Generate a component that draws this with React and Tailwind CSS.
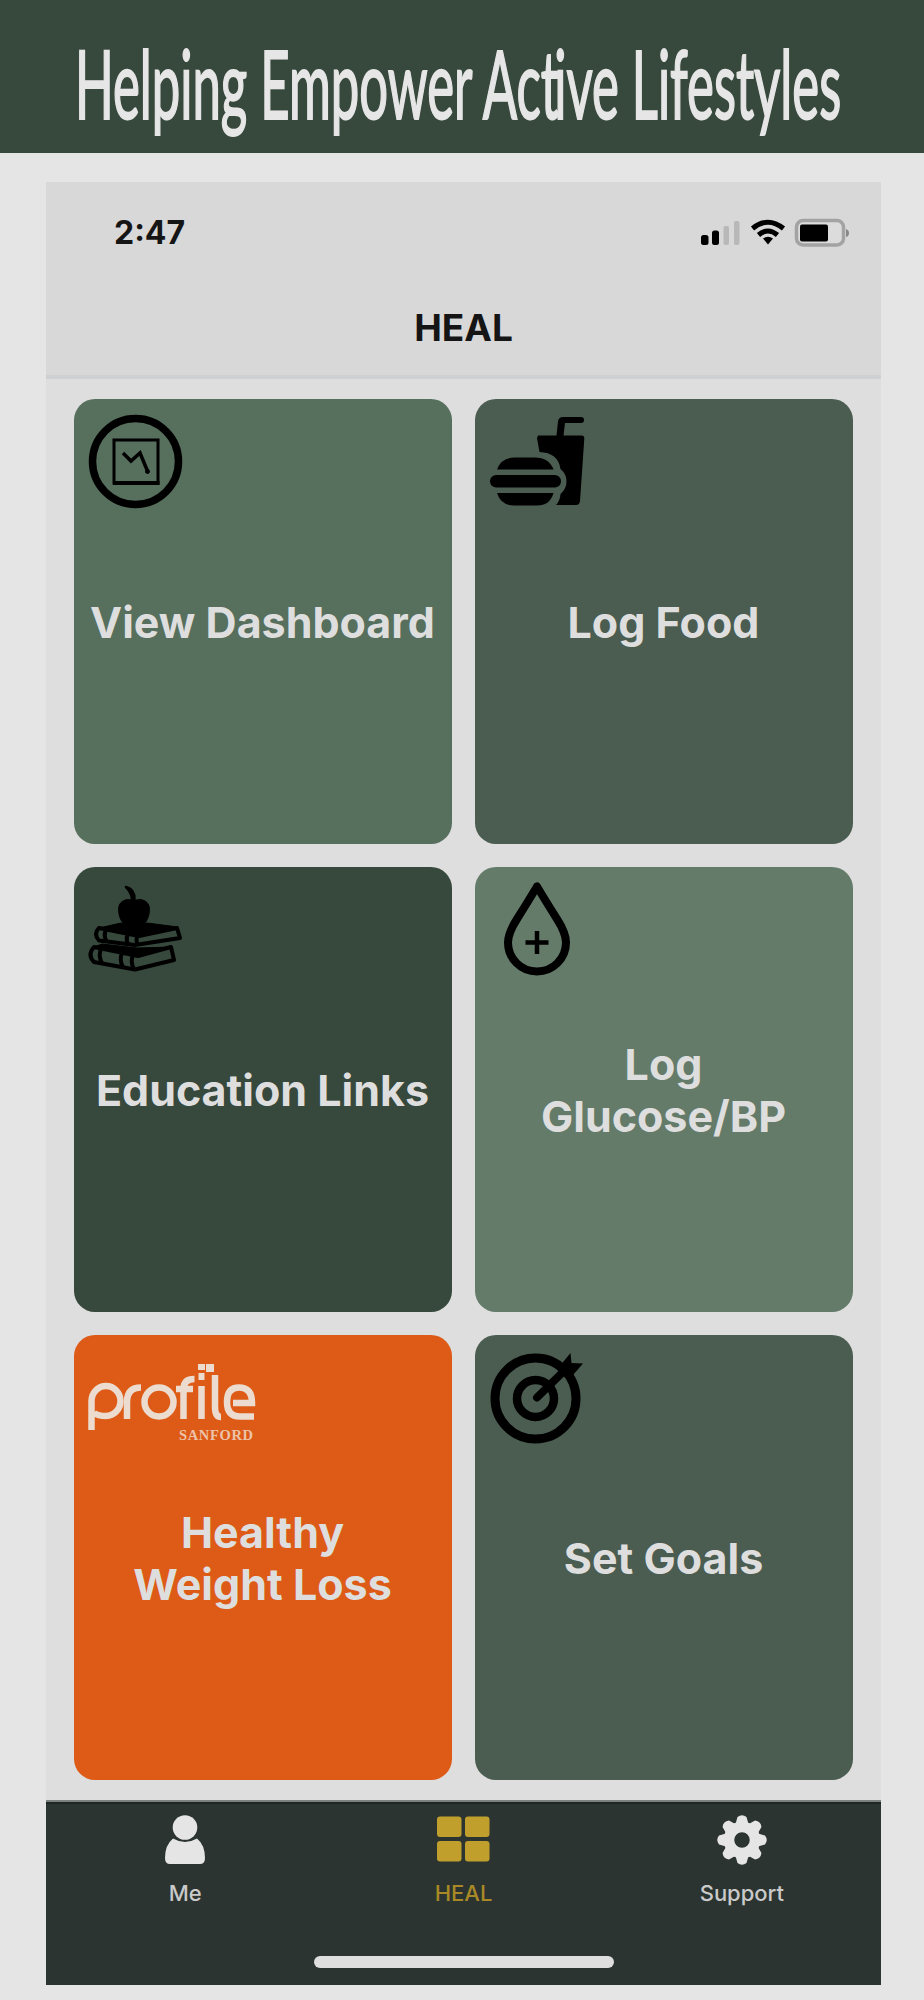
import * as React from "react"

function DashboardIcon() {
  return (
    <svg width="96" height="96" viewBox="0 0 96 96" fill="none" stroke="#000">
      <circle cx="47.500" cy="48.500" r="43" strokeWidth="7.500" />
      <rect x="26" y="27" width="44" height="43" strokeWidth="3" />
      <path d="M25 70h46.500" strokeWidth="4" />
      <path d="M35 40l8 8 9-8 7.500 18" strokeWidth="3.500" />
      <circle cx="59.500" cy="58.500" r="2" fill="#000" />
    </svg>
  )
}

function FoodIcon() {
  return (
    <svg width="96" height="96" viewBox="0 0 96 96">
      <path d="M49 22.500h18.500l1.500-14q.5-4.500 5-4.500h18q3 0 3 3t-3 3H76l-1.500 12.500h18q3 0 2.800 3L91 88q-.3 4-4 4H67q4-4 4.500-11 6-5 6-12.500t-6-12.500Q69 39.500 50.500 39L48 25z" />
      <path d="M8 56.500Q12 44.500 26 44.500h20Q60 44.500 64.500 56.500z" />
      <rect x="1" y="62" width="71" height="12.500" rx="6.250" />
      <path d="M8 80h56.500Q61 92.500 48 92.500H25Q12 92.500 8 80z" />
    </svg>
  )
}

function BooksIcon() {
  return (
    <svg width="96" height="92" viewBox="0 0 96 92" stroke="#000" strokeLinejoin="round">
      <path d="M38 6q9 2 8.500 13l-2.500 0Q44 12 38 6z" strokeWidth="2.500" />
      <path d="M46 20c6-3 13-1 15 5 2 8-3 21-11 20.500h-8C34 46 29 33 31 25c2-6 9-8 15-5z" strokeWidth="1" />
      <path d="M9 47.500L33 42q12 6 26 0l31 4-39 8z" />
      <path d="M11 47q-6 6 0 12.500L47 64l45-7-3-10-38 8z" fill="none" strokeWidth="4" />
      <path d="M18 49q-3 6 1 12M40 53q-3 6 1 11M50 54q-3 5 0 10" fill="none" strokeWidth="4" />
      <path d="M6 66l8-3 35 4 35-1-33 9z" />
      <path d="M6 66q-7 8 0 15l41 7.500 39-9.500-3-13-33 9z" fill="none" strokeWidth="4" />
      <path d="M13 68q-3 7 1 14M34 72q-3 7 1 14M45 74q-3 7 1 14" fill="none" strokeWidth="4" />
    </svg>
  )
}

function DropIcon() {
  return (
    <svg width="96" height="96" viewBox="0 0 96 96" fill="none" stroke="#000" strokeLinejoin="round">
      <path d="M48 5.500Q40 19 28 38C21 49 19 55 19 61.500a29 29 0 0 0 58 0c0-6.500-2-12.500-9-23.500Q56 19 48 5.500z" strokeWidth="8" />
      <path d="M48 50v23M36.500 61.500h23" strokeWidth="4.500" />
    </svg>
  )
}

function TargetIcon() {
  return (
    <svg width="100" height="96" viewBox="0 0 100 96" fill="none" stroke="#000">
      <circle cx="46.500" cy="49.500" r="40.500" strokeWidth="9" />
      <circle cx="46.500" cy="49.500" r="18.500" strokeWidth="8.500" />
      <path d="M48 48.500L76 21" strokeWidth="8" strokeLinecap="round" />
      <path d="M70 18L81.500 4l1 10L94 14.500 84 26l-11 1z" fill="#000" stroke="none" />
    </svg>
  )
}

function ProfileLogo() {
  return (
    <svg width="180" height="96" viewBox="0 0 180 96">
      <g fill="none" stroke="#ecdcd0" strokeWidth="6.500">
        <path d="M3.500 81V52a14.500 15 0 1 1 14.500 15q-8 0-12-3" />
        <path d="M39 70V53q0-14.500 14-14.500" />
        <ellipse cx="71" cy="53" rx="14.500" ry="14.500" />
        <path d="M95.500 70V40q0-10 11-10M88 40h17" />
        <path d="M113.500 37v33M127 26v32q0 10 6 10" />
        <path d="M145 54h19q0-15.500-13-15.500-12 0-12 14.500t13 14.500h14" />
      </g>
      <g fill="#ecdcd0">
        <rect x="110.500" y="24" width="6" height="7" />
        <rect x="110" y="15" width="7" height="6" />
        <rect x="118" y="15" width="8" height="8" />
      </g>
      <text x="91" y="90.500" textLength="74" fill="#ecc3aa" fontFamily="Liberation Serif, serif" fontSize="14.500" fontWeight="700">SANFORD</text>
    </svg>
  )
}

const tiles = [
  { label: ["View Dashboard"], color: "bg-[#576f5d]", icon: <DashboardIcon /> },
  { label: ["Log Food"], color: "bg-[#4b5c50]", icon: <FoodIcon /> },
  { label: ["Education Links"], color: "bg-[#37483c]", icon: <BooksIcon /> },
  { label: ["Log", "Glucose/BP"], color: "bg-[#647b6a]", icon: <DropIcon /> },
  { label: ["Healthy", "Weight Loss"], color: "bg-[#dd5b16]", icon: <ProfileLogo /> },
  { label: ["Set Goals"], color: "bg-[#4b5c50]", icon: <TargetIcon /> },
]

function Tile({ label, color, icon }) {
  return (
    <button className={`relative flex h-[445px] items-center justify-center rounded-[21px] ${color}`}>
      <span className="absolute left-[14px] top-[14px]">{icon}</span>
      <span className="pr-px text-[43px] font-bold leading-[52px] text-[#dedede]">
        {label.map((line) => (
          <span key={line} className="block whitespace-nowrap">{line}</span>
        ))}
      </span>
    </button>
  )
}

function StatusBar() {
  return (
    <div className="flex h-[102px] items-center justify-between pl-[68px] pr-[29px]">
      <span className="text-[32px] font-bold text-[#151515]">2:47</span>
      <svg width="152" height="30" viewBox="0 0 152 30">
        <rect x="1" y="17" width="7.500" height="10" rx="2.500" />
        <rect x="12" y="12.500" width="7" height="14.500" rx="2.500" />
        <rect x="23.500" y="8" width="5.500" height="19" rx="2" fill="#b8b8b8" />
        <rect x="34" y="3" width="5.500" height="24" rx="2" fill="#b8b8b8" />
        <g fill="none" stroke="#000" strokeWidth="5">
          <path d="M52.500 10.500Q68 -2 83.500 10.500" />
          <path d="M58.500 17Q68 9 77.500 17" />
        </g>
        <path d="M63 20.500q5-3.500 10 0l-5 6z" />
        <rect x="96.500" y="2.500" width="47" height="24.500" rx="6.500" fill="#dcdcdc" stroke="#a3a3a3" strokeWidth="3.500" />
        <rect x="100" y="6.500" width="28" height="17" rx="2" />
        <path d="M146 11q3 1 3 4t-3 4z" fill="#888" />
      </svg>
    </div>
  )
}

function TabBar() {
  return (
    <nav className="border-t-2 border-[#7d8180]">
      <div className="grid grid-cols-3 border-t-2 border-[#1e2624] pt-[11px] text-[22px] font-medium leading-[30px]">
        <div className="flex flex-col items-center gap-[13px] text-[#cacaca]">
          <svg width="42" height="50" viewBox="0 0 42 50" fill="#e5e5e5">
            <path d="M9 23.500Q1 30 1 43q0 6 5 6h30q5 0 5-6 0-13-8-19.500-12 7-24 0z" />
            <ellipse cx="21" cy="12.500" rx="13.500" ry="13.500" fill="#2b3431" />
            <circle cx="21" cy="12.500" r="12.300" />
          </svg>
          Me
        </div>
        <div className="flex flex-col items-center gap-[13px] text-[#a98925]">
          <svg width="54" height="50" viewBox="0 0 54 50" fill="#c19f2d">
            <rect x="1" y="1.500" width="24.500" height="20.500" rx="3" />
            <rect x="29" y="1.500" width="24.500" height="20.500" rx="3" />
            <rect x="1" y="26" width="24.500" height="20.500" rx="3" />
            <rect x="29" y="26" width="24.500" height="20.500" rx="3" />
          </svg>
          HEAL
        </div>
        <div className="flex flex-col items-center gap-[13px] text-[#cacaca]">
          <svg width="50" height="50" viewBox="-25 -25 50 50">
            <circle r="13" fill="none" stroke="#e5e5e5" strokeWidth="10.500" />
            {[0, 45, 90, 135].map((angle) => (
              <path key={angle} d="M-6.500 -16l2-7q4.500-3.500 9 0l2 7zM-6.500 16l2 7q4.500 3.500 9 0l2-7z" fill="#e5e5e5" transform={`rotate(${angle})`} />
            ))}
          </svg>
          Support
        </div>
      </div>
      <div className="mx-auto mt-[48px] h-[12px] w-[300px] rounded-full bg-[#dedede]" />
    </nav>
  )
}

export default function App() {
  return (
    <div className="h-[2000px] w-[924px] overflow-hidden bg-[#e5e5e5] font-['Inter',sans-serif]">
      <header className="flex h-[153px] justify-center bg-[#37483c] pr-[8px] pt-[17px]">
        <h1 className="origin-top scale-x-[0.535] whitespace-nowrap font-['Lato',sans-serif] text-[95px] leading-[131px] text-[#e6e6e6] [-webkit-text-stroke:2px_#e6e6e6]">
          Helping Empower Ac<span className="tracking-[-9px]">t</span>ive Lifestyles
        </h1>
      </header>
      <main className="ml-[46px] mt-[29px] flex h-[1803px] w-[835px] flex-col bg-[#dedede]">
        <div className="h-[197px] border-b-[4px] border-[#cfd0d1] bg-[#d8d8d8]">
          <StatusBar />
          <h2 className="text-center text-[37px] font-bold leading-[88px] text-[#151515]">HEAL</h2>
        </div>
        <div className="grid grid-cols-2 gap-[23px] px-[28px] pt-[20px]">
          {tiles.map((tile) => (
            <Tile key={tile.label[0]} {...tile} />
          ))}
        </div>
        <div className="mt-auto h-[185px] bg-[#2b3431]">
          <TabBar />
        </div>
      </main>
    </div>
  )
}
